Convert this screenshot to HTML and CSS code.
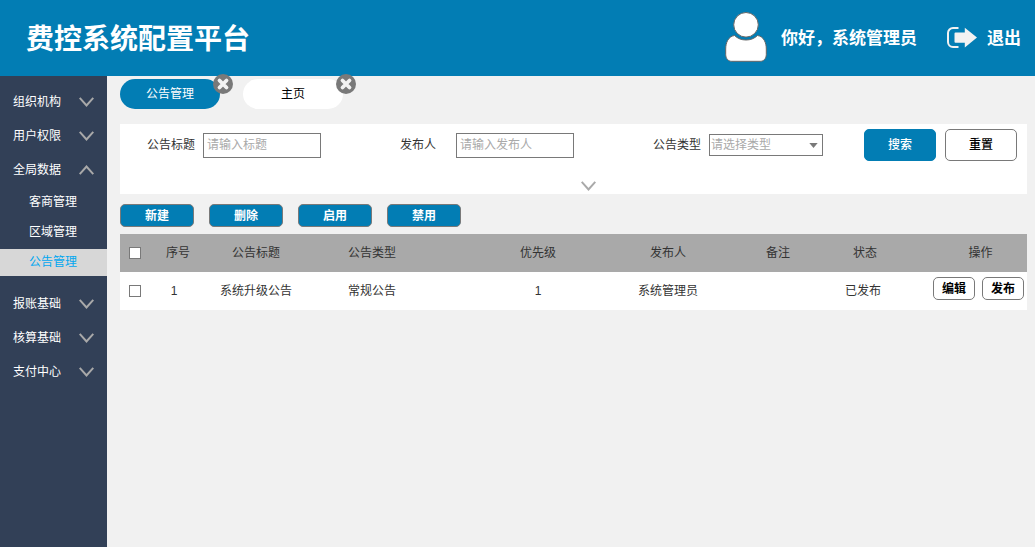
FILE: index.html
```html
<!DOCTYPE html>
<html lang="zh-CN">
<head>
<meta charset="utf-8">
<meta name="viewport" content="width=device-width, initial-scale=1">
<title>费控系统配置平台</title>
<link rel="stylesheet" href="styles.css">
</head>
<body>
<svg class="sprite" aria-hidden="true">
  <symbol id="chevron-down" viewBox="0 0 15 10"><path d="M.7.8l6.800 7.700L14.300.8" fill="none" stroke="#a9a9a9" stroke-width="2"/></symbol>
  <symbol id="chevron-up" viewBox="0 0 15 10"><path d="M.7 9.200l6.800-7.700 6.800 7.700" fill="none" stroke="#a9a9a9" stroke-width="2"/></symbol>
  <symbol id="close" viewBox="0 0 20 20"><circle cx="10" cy="10" r="10" fill="#797979"/><path d="M6.500 6.500l7 7M13.500 6.500l-7 7" stroke="#f2f2f2" stroke-width="3.800" stroke-linecap="round"/></symbol>
</svg>
<header class="header">
  <h1 class="brand">费控系统配置平台</h1>
  <div class="user">
    <svg class="avatar" viewBox="0 0 42 50" aria-hidden="true">
      <circle cx="21" cy="12.800" r="12.300" fill="#fff" stroke="#666" stroke-width="1"/>
      <path d="M9.500 23.500C3 24.500.7 31 .7 37v5.500c0 4 2.500 6.800 6 6.800h28.600c3.500 0 6-2.800 6-6.800V37c0-6-2.300-12.500-8.800-13.500-3.200 3-7 4.500-11.500 4.500s-8.300-1.500-11.500-4.500z" fill="#fff" stroke="#666" stroke-width="1"/>
    </svg>
    <span class="greeting">你好，系统管理员</span>
    <a class="logout" href="#">
      <svg class="logout-icon" viewBox="0 0 30 21" aria-hidden="true">
        <path d="M11.500 1.100H6a5 5 0 0 0-5 5v8.800a5 5 0 0 0 5 5h5.500" fill="none" stroke="#f2f2f2" stroke-width="2"/>
        <path d="M8.500 5.500h9.300V.8L30 10.500 17.800 20.400V15.700H8.500a1 1 0 0 1-1-1V6.500a1 1 0 0 1 1-1z" fill="#f2f2f2"/>
      </svg>
      <span class="logout-text">退出</span>
    </a>
  </div>
</header>
<div class="shell">
  <nav class="sidebar">
    <button class="group" type="button">组织机构<svg class="chevron"><use href="#chevron-down"/></svg></button>
    <button class="group" type="button">用户权限<svg class="chevron"><use href="#chevron-down"/></svg></button>
    <button class="group" type="button" aria-expanded="true">全局数据<svg class="chevron"><use href="#chevron-up"/></svg></button>
    <div class="submenu">
      <a class="subitem" href="#">客商管理</a>
      <a class="subitem" href="#">区域管理</a>
      <a class="subitem current" href="#">公告管理</a>
    </div>
    <button class="group" type="button">报账基础<svg class="chevron"><use href="#chevron-down"/></svg></button>
    <button class="group" type="button">核算基础<svg class="chevron"><use href="#chevron-down"/></svg></button>
    <button class="group" type="button">支付中心<svg class="chevron"><use href="#chevron-down"/></svg></button>
  </nav>
  <main class="content">
    <div class="tabs">
      <div class="tab active">
        <a class="tab-link" href="#">公告管理</a>
        <button class="tab-close" type="button" aria-label="关闭公告管理"><svg><use href="#close"/></svg></button>
      </div>
      <div class="tab">
        <a class="tab-link" href="#">主页</a>
        <button class="tab-close" type="button" aria-label="关闭主页"><svg><use href="#close"/></svg></button>
      </div>
    </div>
    <form class="filters">
      <div class="filter-row">
        <div class="field"><label class="field-label" for="title">公告标题</label><input class="text" id="title" type="text" placeholder="请输入标题"></div>
        <div class="field"><label class="field-label" for="author">发布人</label><input class="text" id="author" type="text" placeholder="请输入发布人"></div>
        <div class="field"><label class="field-label" for="kind">公告类型</label><span class="select-box"><select class="select" id="kind"><option>请选择类型</option><option>常规公告</option></select><svg class="caret" viewBox="0 0 10 6"><path d="M0 0h10L5 6z" fill="#797979"/></svg></span></div>
        <div class="filter-actions">
          <button class="btn primary" type="button">搜索</button>
          <button class="btn" type="button">重置</button>
        </div>
      </div>
      <button class="more" type="button" aria-label="展开"><svg class="chevron"><use href="#chevron-down"/></svg></button>
    </form>
    <div class="toolbar">
      <button class="tool" type="button">新建</button>
      <button class="tool" type="button">删除</button>
      <button class="tool" type="button">启用</button>
      <button class="tool" type="button">禁用</button>
    </div>
    <table class="table">
      <colgroup><col class="c-check"><col class="c-index"><col class="c-title"><col class="c-kind"><col class="c-level"><col class="c-author"><col class="c-note"><col class="c-state"><col class="c-ops"></colgroup>
      <thead>
        <tr><th><input class="check" type="checkbox" aria-label="全选"></th><th>序号</th><th>公告标题</th><th>公告类型</th><th class="level">优先级</th><th>发布人</th><th>备注</th><th>状态</th><th class="ops-head">操作</th></tr>
      </thead>
      <tbody>
        <tr><td><input class="check" type="checkbox" aria-label="选择第1行"></td><td class="index">1</td><td>系统升级公告</td><td>常规公告</td><td class="level">1</td><td>系统管理员</td><td></td><td class="state">已发布</td><td class="ops"><div class="ops-list"><button class="op" type="button">编辑</button><button class="op" type="button">发布</button></div></td></tr>
      </tbody>
    </table>
  </main>
</div>
</body>
</html>
```
FILE: styles.css
```css
* { box-sizing: border-box; }
body {
  margin: 0;
  min-height: 100vh;
  display: flex;
  flex-direction: column;
  background: #f1f1f1;
  color: #333;
  font-family: "Liberation Sans", "Noto Sans CJK SC", sans-serif;
  font-size: 12px;
  line-height: 18px;
}
button, input, select { font: inherit; color: inherit; margin: 0; }
button { padding: 0; border: 0; background: none; cursor: pointer; }
a { color: inherit; text-decoration: none; }
svg { display: block; }
.sprite { position: absolute; width: 0; height: 0; }
.chevron { width: 15px; height: 10px; }

.header {
  display: flex;
  align-items: center;
  justify-content: space-between;
  height: 76px;
  padding: 0 14px 2px 26px;
  background: #027db4;
  color: #fff;
}
.brand { margin: 0; padding-top: 5px; font-size: 28px; line-height: 40px; }
.user { display: flex; align-items: center; font-size: 17px; line-height: 24px; font-weight: bold; }
.avatar { width: 42px; height: 50px; margin-right: 14px; }
.greeting { margin-right: 30px; padding-top: 4px; }
.logout { display: flex; align-items: center; gap: 10px; }
.logout-text { padding-top: 4px; }
.logout-icon { width: 30px; height: 21px; }

.shell { flex: 1; display: flex; }
.sidebar { flex: none; width: 107px; padding-top: 9px; background: #324057; color: #fff; }
.group {
  display: flex;
  align-items: center;
  justify-content: space-between;
  width: 100%;
  height: 34px;
  padding: 0 13px;
}
.submenu { display: grid; gap: 3px; margin: 2px 0 11px; }
.subitem { padding: 4px 0 5px 29px; }
.current { background: #d7d7d7; color: #02a7f0; }

.content { flex: 1; min-width: 0; padding: 3px 8px 0 13px; }
.tabs { display: flex; gap: 23px; margin-bottom: 15px; }
.tab { position: relative; width: 100px; border-radius: 15px; background: #fff; color: #000; }
.active { background: #027db4; color: #fff; }
.tab-link { display: block; padding: 6px 0; text-align: center; }
.tab-close { position: absolute; top: -5px; right: -13px; }
.tab-close svg { width: 20px; height: 20px; }

.filters { height: 70px; padding: 5px 10px 0 27px; background: #fff; margin-bottom: 10px; }
.filter-row { display: grid; grid-template-columns: 253fr 253fr 211fr 153fr; align-items: center; }
.field { display: flex; align-items: center; }
.field-label { width: 56px; }
.text { width: 118px; height: 25px; padding: 0 3px 1px; border: 1px solid #797979; background: #fff; }
.text::placeholder { color: #a9a9a9; opacity: 1; }
.select-box { position: relative; }
.select {
  appearance: none;
  display: block;
  width: 114px;
  height: 22px;
  padding: 0 1px 1px;
  border: 1px solid #797979;
  border-radius: 0;
  background: #fff;
  color: #a9a9a9;
}
.caret { position: absolute; right: 5px; top: 9px; width: 9px; height: 5px; pointer-events: none; }
.filter-actions { display: flex; gap: 9px; }
.btn {
  width: 72px;
  height: 32px;
  border: 1px solid #797979;
  border-radius: 5px;
  background: #fff;
  color: #000;
  font-weight: 500;
}
.primary { border-color: #027db4; background: #027db4; color: #fff; }
.more { display: block; margin: 20px auto 0; padding-left: 12px; }

.toolbar { display: flex; gap: 15px; margin-bottom: 7px; }
.tool {
  width: 74px;
  height: 23px;
  border: 1px solid #797979;
  border-radius: 5px;
  background: #027db4;
  color: #fff;
  font-weight: bold;
}

.table { width: 100%; table-layout: fixed; border-collapse: collapse; background: #fff; }
.table th, .table td { height: 38px; padding: 0; text-align: center; font-weight: normal; }
.table thead { background: #a9a9a9; }
.c-check { width: 30px; }
.c-index { width: 56px; }
.c-title { width: 100px; }
.c-kind { width: 132px; }
.c-level { width: 160px; }
.c-author { width: 140px; }
.c-note { width: 80px; }
.c-state { width: 94px; }
.c-ops { width: 115px; }
.table .level { padding-left: 40px; }
.table .ops-head { padding-left: 22px; }
.table .index { padding-right: 8px; }
.table .state { padding-right: 4px; }
.table .ops { padding: 5px 3px 0 0; vertical-align: top; }
.ops-list { display: flex; justify-content: flex-end; gap: 7px; }
.op { width: 42px; height: 23px; border: 1px solid #797979; border-radius: 5px; background: #fff; color: #000; font-weight: bold; }
.check {
  appearance: none;
  display: block;
  width: 12px;
  height: 12px;
  margin: 0 auto;
  border: 1px solid #797979;
  background: #fff;
}
.check:checked { background: #027db4; }
```
